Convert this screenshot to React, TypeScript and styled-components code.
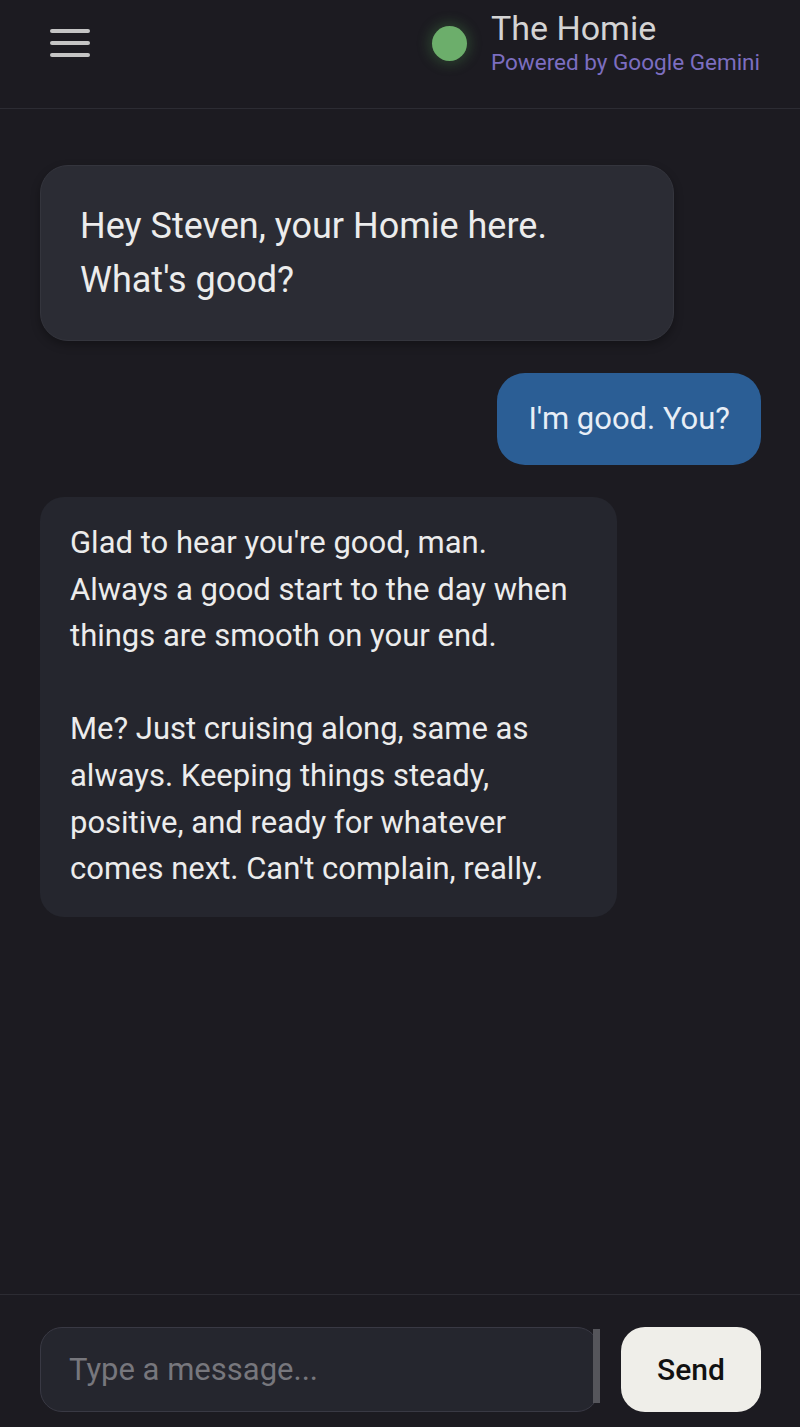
import styled, { createGlobalStyle } from "styled-components"

const GlobalStyle = createGlobalStyle`
  html, body {
    margin: 0;
    padding: 0;
    background: #1c1b21;
  }
  * {
    box-sizing: border-box;
  }
`

const Screen = styled.div`
  height: 100vh;
  display: flex;
  flex-direction: column;
  background: #1c1b21;
  font-family: Roboto, "Liberation Sans", sans-serif;
`

const Header = styled.header`
  height: 109px;
  flex-shrink: 0;
  display: flex;
  align-items: center;
  justify-content: space-between;
  padding: 0 40px 22px 50px;
  border-bottom: 1px solid #2c2c33;
`

const MenuButton = styled.button`
  width: 40px;
  height: 28px;
  padding: 0;
  border: none;
  background: none;
  display: flex;
  flex-direction: column;
  justify-content: space-between;
  cursor: pointer;
`

const MenuLine = styled.span`
  display: block;
  height: 4px;
  border-radius: 2px;
  background: #c4c4c4;
`

const Brand = styled.div`
  display: flex;
  align-items: center;
  gap: 24px;
`

const StatusDot = styled.span`
  width: 35px;
  height: 35px;
  border-radius: 50%;
  background: #6cae6b;
  box-shadow: 0 0 12px 4px rgba(80, 160, 80, 0.25);
`

const BrandText = styled.div`
  display: flex;
  flex-direction: column;
`

const Title = styled.div`
  font-size: 34px;
  line-height: 38px;
  color: #d4d4d4;
`

const Subtitle = styled.div`
  font-size: 22.5px;
  line-height: 30px;
  color: #7c6ec0;
`

const Messages = styled.main`
  flex: 1;
  display: flex;
  flex-direction: column;
  gap: 32px;
  padding: 56px 39px 32px 40px;
  overflow-y: auto;
`

const Bubble = styled.div<{ $from: "bot" | "intro" | "user" }>`
  align-self: ${({ $from }): string => ($from === "user" ? "flex-end" : "flex-start")};
  width: ${({ $from }): string => ($from === "intro" ? "634px" : $from === "bot" ? "577px" : "auto")};
  color: ${({ $from }): string => ($from === "user" ? "#e8eef6" : "#ececec")};
  background: ${({ $from }): string => ($from === "user" ? "#2b5e95" : $from === "intro" ? "#2b2c34" : "#25262e")};
  border-radius: ${({ $from }): string => ($from === "bot" ? "24px" : "28px")};
  font-size: ${({ $from }): string => ($from === "intro" ? "36px" : "31px")};
  line-height: ${({ $from }): string => ($from === "intro" ? "54px" : $from === "user" ? "46px" : "46.6px")};
  padding: ${({ $from }): string => ($from === "intro" ? "33px 39px 33px" : $from === "user" ? "23px 31px" : "23px 30px 24px")};
  border: ${({ $from }): string => ($from === "intro" ? "1px solid #34353d" : "none")};
  box-shadow: ${({ $from }): string => ($from === "intro" ? "0 4px 10px rgba(0, 0, 0, 0.3)" : "none")};
  white-space: pre-line;
`

const Footer = styled.footer`
  flex-shrink: 0;
  height: 133px;
  display: flex;
  gap: 22px;
  padding: 32px 39px 15px 40px;
  border-top: 1px solid #2c2c33;
`

const InputBox = styled.div`
  flex: 1;
  position: relative;
  display: flex;
  align-items: center;
  padding: 0 28px;
  border: 1px solid #393944;
  border-radius: 22px;
  background: #25262e;

  &::after {
    content: "";
    position: absolute;
    right: -2px;
    top: 1px;
    bottom: 8px;
    width: 7px;
    background: #55555b;
  }
`

const MessageInput = styled.input`
  width: 100%;
  border: none;
  outline: none;
  background: transparent;
  font-family: Roboto, "Liberation Sans", sans-serif;
  font-size: 31px;
  color: #ececec;
  padding: 0;

  &::placeholder {
    color: #77777d;
  }
`

const SendButton = styled.button`
  width: 140px;
  border: none;
  border-radius: 24px;
  background: #efeee9;
  color: #111;
  font-family: Roboto, "Liberation Sans", sans-serif;
  font-size: 30px;
  font-weight: 500;
  cursor: pointer;
`

const messages: { from: "bot" | "intro" | "user", text: string }[] = [
    { from: "intro", text: "Hey Steven, your Homie here.\nWhat's good?" },
    { from: "user", text: "I'm good. You?" },
    {
        from: "bot",
        text: "Glad to hear you're good, man.\nAlways a good start to the day when\nthings are smooth on your end.\n\nMe? Just cruising along, same as\nalways. Keeping things steady,\npositive, and ready for whatever\ncomes next. Can't complain, really.",
    },
]

const App = (): JSX.Element => (
    <>
        <GlobalStyle />
        <Screen>
            <Header>
                <MenuButton aria-label="Menu">
                    <MenuLine />
                    <MenuLine />
                    <MenuLine />
                </MenuButton>
                <Brand>
                    <StatusDot />
                    <BrandText>
                        <Title>The Homie</Title>
                        <Subtitle>Powered by Google Gemini</Subtitle>
                    </BrandText>
                </Brand>
            </Header>

            <Messages>
                {messages.map((m, i) => (
                    <Bubble key={i} $from={m.from}>{m.text}</Bubble>
                ))}
            </Messages>

            <Footer>
                <InputBox>
                    <MessageInput placeholder="Type a message..." />
                </InputBox>
                <SendButton>Send</SendButton>
            </Footer>
        </Screen>
    </>
)

export default App
